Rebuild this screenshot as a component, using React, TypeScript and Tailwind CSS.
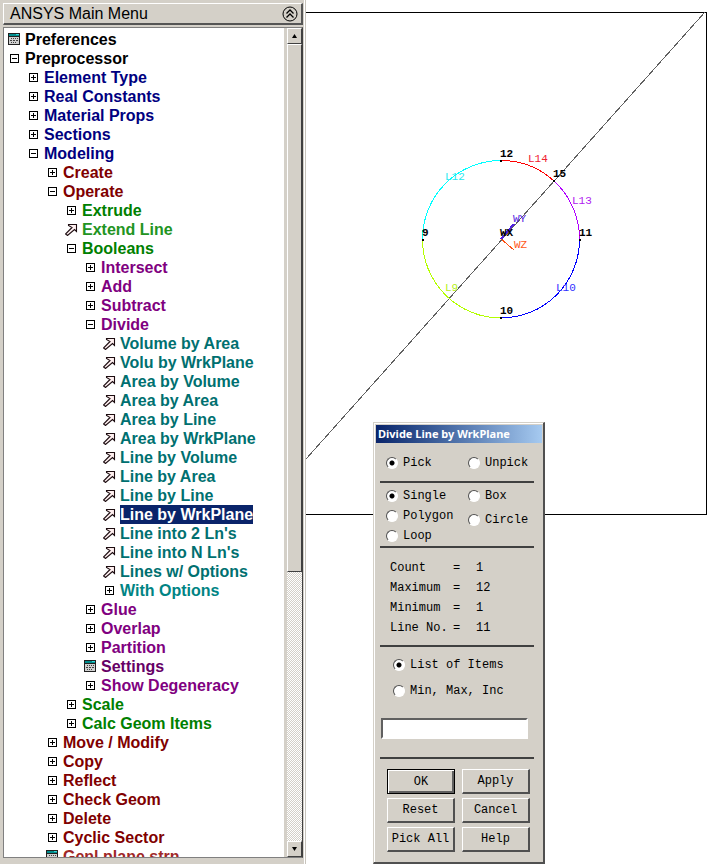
import React from 'react';

type Kind = 'plus' | 'minus' | 'arrow' | 'form';

interface Item {
  label: string;
  kind: Kind;
  tone?: string;
  selected?: boolean;
  children?: Item[];
}

const plus = (label: string): Item => ({ label, kind: 'plus' });
const pick = (label: string): Item => ({ label, kind: 'arrow' });

const tones = [
  'text-black',
  'text-[#000080]',
  'text-[#800000]',
  'text-[#008000]',
  'text-[#800080]',
  'text-[#007070]',
];

const menu: Item[] = [
  { label: 'Preferences', kind: 'form' },
  {
    label: 'Preprocessor',
    kind: 'minus',
    children: [
      plus('Element Type'),
      plus('Real Constants'),
      plus('Material Props'),
      plus('Sections'),
      {
        label: 'Modeling',
        kind: 'minus',
        children: [
          plus('Create'),
          {
            label: 'Operate',
            kind: 'minus',
            children: [
              plus('Extrude'),
              { label: 'Extend Line', kind: 'arrow', tone: 'text-[#229422]' },
              {
                label: 'Booleans',
                kind: 'minus',
                children: [
                  plus('Intersect'),
                  plus('Add'),
                  plus('Subtract'),
                  {
                    label: 'Divide',
                    kind: 'minus',
                    children: [
                      pick('Volume by Area'),
                      pick('Volu by WrkPlane'),
                      pick('Area by Volume'),
                      pick('Area by Area'),
                      pick('Area by Line'),
                      pick('Area by WrkPlane'),
                      pick('Line by Volume'),
                      pick('Line by Area'),
                      pick('Line by Line'),
                      { label: 'Line by WrkPlane', kind: 'arrow', selected: true },
                      pick("Line into 2 Ln's"),
                      pick("Line into N Ln's"),
                      pick('Lines w/ Options'),
                      { label: 'With Options', kind: 'plus', tone: 'text-[#008484]' },
                    ],
                  },
                  plus('Glue'),
                  plus('Overlap'),
                  plus('Partition'),
                  { label: 'Settings', kind: 'form', tone: 'text-[#660066]' },
                  plus('Show Degeneracy'),
                ],
              },
              plus('Scale'),
              plus('Calc Geom Items'),
            ],
          },
          plus('Move / Modify'),
          plus('Copy'),
          plus('Reflect'),
          plus('Check Geom'),
          plus('Delete'),
          plus('Cyclic Sector'),
          { label: 'Genl plane strn', kind: 'form', tone: 'text-[#a02828]' },
        ],
      },
    ],
  },
];

function Glyph({ kind }: { kind: Kind }) {
  if (kind === 'arrow') {
    return (
      <svg width="13" height="13" viewBox="0 0 13 13" className="shrink-0" aria-hidden="true">
        <path
          d="M3.5 1.5H11.5V8.5L9.5 6.500L2.500 12.500L0.500 11L7 4.500L3.500 2.500Z"
          fill="#fff0f0"
          stroke="#1c0c10"
          strokeWidth="1.1"
        />
      </svg>
    );
  }
  if (kind === 'form') {
    return (
      <svg width="13" height="13" viewBox="0 0 13 13" shapeRendering="crispEdges" className="shrink-0" aria-hidden="true">
        <rect x="0" y="0" width="12" height="12" fill="#202020" />
        <rect x="1" y="1" width="10" height="2" fill="#008c8c" />
        <rect x="8" y="1" width="3" height="1" fill="#30d8d8" />
        <rect x="1" y="4" width="10" height="7" fill="#d0d0d0" />
        <path d="M3 5.5h1M5 5.5h1M7 5.5h1M9 5.5h1M2 7.5h2M5 7.5h2M8 7.5h2M3 9.5h1M5 9.5h1M7 9.5h1" stroke="#404040" />
      </svg>
    );
  }
  return (
    <svg width="13" height="13" viewBox="0 0 13 13" shapeRendering="crispEdges" className="shrink-0" aria-hidden="true">
      <rect x="2.5" y="2.5" width="8" height="8" fill="#fff" stroke="#000" />
      <path d={kind === 'plus' ? 'M4 6.5h5M6.5 4v5' : 'M4 6.5h5'} stroke="#000" />
    </svg>
  );
}

function Tree({ items, level }: { items: Item[]; level: number }) {
  return (
    <ul className={level > 0 ? 'pl-[19px]' : ''}>
      {items.map((item) => (
        <li key={item.label}>
          <button type="button" className="flex h-[19px] items-center gap-1 whitespace-nowrap text-base font-bold leading-[19px]">
            <Glyph kind={item.kind} />
            <span className={item.selected ? 'bg-[#0a246a] text-white' : item.tone ?? tones[level]}>{item.label}</span>
          </button>
          {item.children && <Tree items={item.children} level={level + 1} />}
        </li>
      ))}
    </ul>
  );
}

const raised = 'border border-b-[#404040] border-l-white border-r-[#404040] border-t-white bg-[#d4d0c8]';

function ScrollButton({ up }: { up?: boolean }) {
  return (
    <button
      type="button"
      aria-label={up ? 'Scroll up' : 'Scroll down'}
      className={`flex h-4 shrink-0 items-center justify-center ${raised}`}
    >
      <svg width="7" height="4" viewBox="0 0 7 4" aria-hidden="true">
        <path d={up ? 'M1 4L3.5 0L6 4Z' : 'M1 0L3.5 4L6 0Z'} fill="#000" />
      </svg>
    </button>
  );
}

function MainMenu() {
  return (
    <aside className="flex w-[306px] shrink-0 flex-col border-r border-[#c8c4bc] bg-white pr-px">
      <div className="flex min-h-0 flex-1 flex-col gap-0.5 bg-[#d4d0c8] pb-1.5 pl-[3px] pr-px pt-[3px]">
        <header className="flex h-[22px] shrink-0 items-center justify-between border border-b-2 border-r-2 border-b-[#555] border-l-white border-r-[#555] border-t-white pl-1.5 pr-[3px]">
          <h1 className="text-base leading-5">ANSYS Main Menu</h1>
          <button type="button" aria-label="Collapse menu">
            <svg width="16" height="16" viewBox="0 0 16 16" fill="none" stroke="#000" aria-hidden="true">
              <circle cx="8" cy="8" r="7" />
              <path d="M4.5 7.5L8 4L11.5 7.5M4.5 11.5L8 8L11.5 11.5" strokeWidth="1.3" />
            </svg>
          </button>
        </header>
        <div className="flex min-h-0 flex-1 border border-b-[#808080] border-l-[#808080] border-r-[#404040] border-t-[#808080] bg-white">
          <nav aria-label="ANSYS Main Menu" className="min-w-0 flex-1 overflow-hidden pl-1 pt-0.5">
            <Tree items={menu} level={0} />
          </nav>
          <div className="flex w-[18px] shrink-0 flex-col bg-[repeating-conic-gradient(#d4d0c8_0_25%,#fff_0_50%)] bg-[length:2px_2px]">
            <div className="flex flex-1 flex-col border-l-[3px] border-[#d4d0c8]">
              <ScrollButton up />
              <div className={`h-[528px] ${raised}`} />
              <div className="flex-1" />
              <ScrollButton />
            </div>
          </div>
        </div>
      </div>
    </aside>
  );
}

function Label({ x, y, color = '#000', children }: { x: number; y: number; color?: string; children: string }) {
  return (
    <text x={x} y={y} fill={color} fontWeight={color === '#000' ? 700 : 400}>
      {children}
    </text>
  );
}

function Plot() {
  return (
    <svg
      width="402"
      height="516"
      viewBox="0 0 402 516"
      fill="none"
      role="img"
      aria-label="Circle divided by the working plane"
      className="font-['Liberation_Mono',monospace] text-[11px]"
    >
      <path d="M0 12.5H400.5V514.5H0" stroke="#000" shapeRendering="crispEdges" />
      <path d="M399 12L0 459" stroke="#606060" shapeRendering="crispEdges" />
      <g shapeRendering="crispEdges">
        <path d="M116.5 239.5A78.5 78.5 0 0 1 195 160.5" stroke="#00ffff" />
        <path d="M195 160.5A78.5 78.5 0 0 1 248 181" stroke="#ff0000" />
        <path d="M248 181A78.5 78.5 0 0 1 273.5 239.5" stroke="#b000ff" />
        <path d="M273.5 239.5A78.5 78.5 0 0 1 195 318" stroke="#0000ff" />
        <path d="M195 318A78.5 78.5 0 0 1 116.5 239.5" stroke="#b4ff00" />
        <path d="M195 239L208 224" stroke="#5020e0" strokeWidth="2" />
        <path d="M195 239L208 250" stroke="#ff5010" />
      </g>
      <path d="M194 160h2v2h-2zM247 180h2v2h-2zM116 239h2v2h-2zM273 239h2v2h-2zM194 317h2v2h-2z" fill="#000" />
      <Label x={194} y={157}>12</Label>
      <Label x={247} y={177}>15</Label>
      <Label x={116} y={236}>9</Label>
      <Label x={273} y={236}>11</Label>
      <Label x={194} y={314}>10</Label>
      <Label x={139} y={180} color="#28e8f0">L12</Label>
      <Label x={222} y={162} color="#f02030">L14</Label>
      <Label x={266} y={204} color="#b020f0">L13</Label>
      <Label x={250} y={291} color="#3030ff">L10</Label>
      <Label x={139} y={291} color="#b4f020">L9</Label>
      <Label x={207} y={222} color="#5020e0">WY</Label>
      <Label x={208} y={248} color="#ff5820">WZ</Label>
      <Label x={194} y={236}>WX</Label>
    </svg>
  );
}

function Radio({ name, label, checked }: { name: string; label: string; checked?: boolean }) {
  return (
    <label className="flex h-4 items-center gap-[5px] whitespace-nowrap">
      <input
        type="radio"
        name={name}
        defaultChecked={checked}
        className="size-3 shrink-0 appearance-none rounded-full border border-b-white border-l-[#505050] border-r-white border-t-[#505050] bg-white checked:bg-[radial-gradient(circle,#000_2px,#fff_3px)]"
      />
      <span>{label}</span>
    </label>
  );
}

function Rule() {
  return <hr className="ml-1 mr-2 h-0.5 border-0 bg-[#404040]" />;
}

const stats = [
  ['Count', '1'],
  ['Maximum', '12'],
  ['Minimum', '1'],
  ['Line No.', '11'],
];

const commands = ['OK', 'Apply', 'Reset', 'Cancel', 'Pick All', 'Help'];

function PickDialog() {
  return (
    <section
      role="dialog"
      aria-label="Divide Line by WrkPlane"
      className="absolute left-[67px] top-[422px] w-[172px] border border-b-2 border-r-2 border-b-[#505050] border-l-[#d4d0c8] border-r-[#505050] border-t-[#d4d0c8] bg-[#d4d0c8] font-['Liberation_Mono',monospace] text-xs leading-4"
    >
      <div className="border-l border-t border-white p-px pb-2.5">
        <h2 className="h-[18px] whitespace-nowrap bg-linear-to-r from-[#0a246a] to-[#a6caf0] pl-0.5 font-['Noto_Sans',sans-serif] text-[11px] font-bold leading-[18px] text-white">
          Divide Line by WrkPlane
        </h2>
        <div className="flex pb-2.5 pl-2.5 pt-3">
          <div className="w-[82px]">
            <Radio name="mode" label="Pick" checked />
          </div>
          <Radio name="mode" label="Unpick" />
        </div>
        <Rule />
        <div className="flex pb-0.5 pl-2.5 pt-[5px]">
          <div className="flex w-[82px] flex-col gap-1">
            <Radio name="shape" label="Single" checked />
            <Radio name="shape" label="Polygon" />
            <Radio name="shape" label="Loop" />
          </div>
          <div className="flex flex-col gap-2">
            <Radio name="shape" label="Box" />
            <Radio name="shape" label="Circle" />
          </div>
        </div>
        <Rule />
        <table className="mb-[7px] ml-3.5 mt-2.5 leading-5">
          <tbody>
            {stats.map(([name, value]) => (
              <tr key={name}>
                <th scope="row" className="w-[63px] p-0 text-left font-normal">{name}</th>
                <td className="w-[23px] p-0">=</td>
                <td className="p-0">{value}</td>
              </tr>
            ))}
          </tbody>
        </table>
        <Rule />
        <div className="flex flex-col gap-2.5 pb-[19px] pl-[17px] pt-2.5">
          <Radio name="entry" label="List of Items" checked />
          <Radio name="entry" label="Min, Max, Inc" />
        </div>
        <div className="pb-[18px] pl-[5px] pr-3.5">
          <input
            type="text"
            aria-label="Items"
            className="block h-[21px] w-full border-2 border-b-white border-l-[#606060] border-r-white border-t-[#606060] bg-white px-1 outline-none"
          />
        </div>
        <Rule />
        <div className="grid grid-cols-2 gap-x-[7px] gap-y-1 pl-[11px] pr-3 pt-2.5">
          {commands.map((name) => (
            <button
              key={name}
              type="button"
              className={
                name === 'OK'
                  ? 'h-[25px] border border-black p-0 shadow-[inset_1px_1px_#fff,inset_-2px_-2px_#606060]'
                  : 'h-[25px] border border-b-2 border-r-2 border-b-[#505050] border-l-white border-r-[#505050] border-t-white'
              }
            >
              {name}
            </button>
          ))}
        </div>
      </div>
    </section>
  );
}

export default function App() {
  return (
    <div className="flex h-screen overflow-hidden bg-white font-['Liberation_Sans',Arial,sans-serif] text-black">
      <MainMenu />
      <main className="relative min-w-0 flex-1 overflow-hidden">
        <Plot />
        <PickDialog />
      </main>
    </div>
  );
}
